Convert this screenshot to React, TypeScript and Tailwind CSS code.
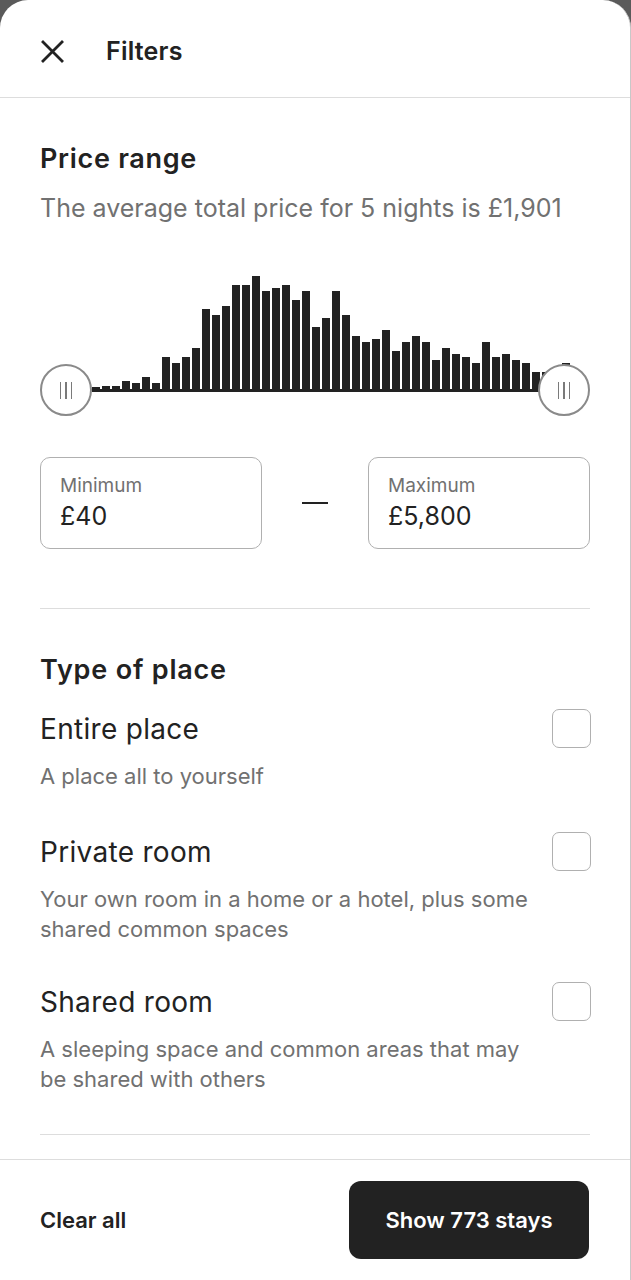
import React from "react";

const bars = [
  2, 3, 3, 8, 6, 12, 6, 32, 26, 32, 41, 80, 74, 83, 104, 104, 113, 98, 101, 104, 89, 98, 62, 71,
  98, 74, 53, 47, 50, 59, 38, 47, 53, 47, 29, 41, 35, 32, 26, 47, 32, 35, 29, 26, 17, 17, 21, 26,
];

const types = [
  { title: "Entire place", desc: ["A place all to yourself"], mt: "mt-0" },
  { title: "Private room", desc: ["Your own room in a home or a hotel, plus some", "shared common spaces"], mt: "mt-[41px]" },
  { title: "Shared room", desc: ["A sleeping space and common areas that may", "be shared with others"], mt: "mt-[38px]" },
];

function Handle({ className }: { className: string }) {
  return (
    <div
      className={`absolute top-[87px] w-[52px] h-[52px] rounded-full bg-white border-2 border-[#8a8a8a] flex items-center justify-center gap-[4.5px] ${className}`}
    >
      <span className="w-[1.2px] h-[17px] bg-[#7a7a7a]" />
      <span className="w-[1.2px] h-[17px] bg-[#7a7a7a]" />
      <span className="w-[1.2px] h-[17px] bg-[#7a7a7a]" />
    </div>
  );
}

function PriceBox({ label, value }: { label: string; value: string }) {
  return (
    <div className="w-[222px] h-[92px] rounded-[10px] border border-[#b0b0b0] px-[19px] pt-[16px]">
      <div className="text-[19px] leading-[24px] text-[#717171]">{label}</div>
      <div className="text-[25px] leading-[32px] text-[#222222] mt-[2px]">{value}</div>
    </div>
  );
}

export default function App() {
  return (
    <div className="bg-[#5a5a5a] w-[631px] h-[1280px]" style={{ fontFamily: "Inter, 'Noto Sans', sans-serif" }}>
      <div className="h-full bg-white rounded-t-[28px] border-r border-[#c8c8c8] flex flex-col overflow-hidden text-[#222222]">
        <header className="h-[98px] shrink-0 border-b border-[#dddddd] flex items-center pl-[41px] pr-10 pt-[6px]">
          <svg width="23" height="23" viewBox="0 0 23 23" className="shrink-0">
            <path d="M2 2 L21 21 M21 2 L2 21" stroke="#222" strokeWidth="2.8" strokeLinecap="square" />
          </svg>
          <h1 className="ml-[42px] text-[25px] font-semibold leading-none tracking-[0.2px]">Filters</h1>
        </header>

        <main className="flex-1 overflow-hidden px-10">
          <section className="pt-[45px]">
            <h2 className="text-[27px] leading-[32px] font-semibold tracking-[0.7px]">Price range</h2>
            <p className="mt-[18px] text-[25px] leading-[30px] text-[#717171]">
              The average total price for 5 nights is £1,901
            </p>

            <div className="relative mt-[54px] h-[139px]">
              <div className="flex items-end gap-[2.5px] pl-[52px] h-[112px]">
                {bars.map((h, i) => (
                  <div key={i} className="w-[7.5px] shrink-0 bg-[#222222]" style={{ height: h }} />
                ))}
              </div>
              <div className="ml-[52px] mr-[40px] h-[3px] bg-[#222222]" />
              <Handle className="left-0" />
              <Handle className="right-0" />
            </div>

            <div className="mt-[41px] flex items-center justify-between">
              <PriceBox label="Minimum" value="£40" />
              <div className="w-[26px] h-[2px] bg-[#222222]" />
              <PriceBox label="Maximum" value="£5,800" />
            </div>
          </section>

          <div className="mt-[59px] h-px bg-[#dddddd]" />

          <section className="pt-[45px]">
            <h2 className="text-[27px] leading-[32px] font-semibold tracking-[0.8px]">Type of place</h2>
            <div className="mt-[23px] flex flex-col">
              {types.map((t) => (
                <div key={t.title} className={`flex justify-between items-start ${t.mt}`}>
                  <div>
                    <div className="text-[28px] leading-[40px] tracking-[0.3px]">{t.title}</div>
                    <p className="mt-[12px] text-[22px] leading-[30px] text-[#717171]">
                      {t.desc.map((d, i) => (
                        <span key={i} className="block">
                          {d}
                        </span>
                      ))}
                    </p>
                  </div>
                  <div className="w-[39px] h-[39px] rounded-[7px] border border-[#b0b0b0] shrink-0 mr-[-1px]" />
                </div>
              ))}
            </div>
          </section>

          <div className="mt-[40px] h-px bg-[#dddddd]" />
        </main>

        <footer className="h-[121px] shrink-0 border-t border-[#dddddd] flex items-center justify-between pl-10 pr-[41px]">
          <button className="text-[22px] font-semibold text-[#222222]">Clear all</button>
          <button className="w-[240px] h-[78px] rounded-[12px] bg-[#222222] text-white text-[22px] font-semibold">
            Show 773 stays
          </button>
        </footer>
      </div>
    </div>
  );
}
